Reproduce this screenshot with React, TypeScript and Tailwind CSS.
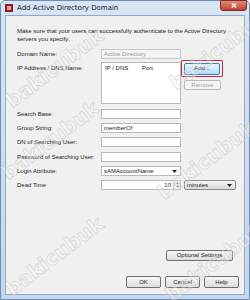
import React from "react";

const font = { fontFamily: '"Liberation Sans", Arial, sans-serif' };

function Btn({ children, className = "" }: { children: React.ReactNode; className?: string }) {
  return (
    <div
      className={
        "flex items-center justify-center rounded-[2px] border border-[#707070] bg-gradient-to-b from-[#f6f6f6] to-[#dddddd] text-[6px] text-[#222] " +
        className
      }
    >
      {children}
    </div>
  );
}

function Field({ children, className = "" }: { children?: React.ReactNode; className?: string }) {
  return (
    <div className={"h-[10px] w-[80px] border border-[#b5b9c0] bg-white flex items-center px-[2px] text-[6px] text-[#222] " + className}>
      {children}
    </div>
  );
}

function Row({ label, children, mt = "mt-[4px]" }: { label: string; children: React.ReactNode; mt?: string }) {
  return (
    <div className={"flex items-center " + mt}>
      <div className="w-[84px] text-[6px] text-[#222] leading-none">{label}</div>
      {children}
    </div>
  );
}

function Arrow() {
  return (
    <svg width="5" height="3" viewBox="0 0 5 3">
      <path d="M0 0 L5 0 L2.5 3 Z" fill="#222" />
    </svg>
  );
}

function Watermark({ className }: { className: string }) {
  return (
    <div
      className={
        "pointer-events-none absolute origin-left -rotate-[37deg] text-[20px] font-bold text-white/40 opacity-70 [-webkit-text-stroke:0.6px_#c4c4c4] " +
        className
      }
      style={{ fontFamily: '"DejaVu Sans", sans-serif' }}
    >
      bakicubuk
    </div>
  );
}

export default function App() {
  return (
    <div className="relative h-[300px] w-[250px] overflow-hidden" style={font}>
      <div className="flex h-full w-full flex-col rounded-t-[5px] border border-[#6f8db3] bg-gradient-to-b from-[#d7e5f5] to-[#c3d7ee]">
        {/* title bar */}
        <div className="relative flex h-[14px] items-center pl-[4px]">
          <div className="flex h-[8px] w-[8px] items-center justify-center bg-[#8a2320]">
            <div className="h-[4px] w-[4px] bg-[#e8a0a0]" />
          </div>
          <div className="ml-[4px] text-[7px] text-[#1a1a1a]" style={{ fontFamily: '"DejaVu Sans", sans-serif' }}>
            Add Active Directory Domain
          </div>
          <div className="absolute right-[2px] top-[-1px] flex h-[11px] w-[27px] items-center justify-center rounded-b-[3px] border border-[#7a2f24] bg-gradient-to-b from-[#e08b78] to-[#c13f28]">
            <svg width="6" height="5" viewBox="0 0 6 5">
              <path d="M0.8 0.5 L5.2 4.5 M5.2 0.5 L0.8 4.5" stroke="white" strokeWidth="1.3" />
            </svg>
          </div>
        </div>
        {/* client */}
        <div className="mx-[4px] mb-[4px] flex flex-1 flex-col border border-[#98a8bd] bg-[#f0f0f0] pl-[11px] pr-[5px]">
          <p className="mt-[11px] text-[6px] leading-[8px] text-[#222]">
            Make sure that your users can successfully authenticate to the Active Directory servers you specify.
          </p>
          <Row label="Domain Name:" mt="mt-[6px]">
            <Field className="!border-[#c8c8c8] !bg-[#f3f3f3] !text-[#999]">Active Directory</Field>
          </Row>
          <div className="mt-[3px] flex items-start">
            <div className="w-[84px] pt-[3px] text-[6px] leading-none text-[#222]">IP Address / DNS Name:</div>
            <div className="h-[42px] w-[80px] border border-[#b5b9c0] bg-white">
              <div className="flex h-[11px] items-center text-[6px] text-[#222]">
                <div className="w-[40px] pl-[3px]">IP / DNS</div>
                <div>Port</div>
              </div>
            </div>
            <div className="flex flex-col items-start">
              <div className="mt-[-2px] rounded-[1px] border-[1.5px] border-[#c4283e] px-[2px] py-[1.5px]">
                <div className="flex h-[12px] w-[36px] items-center justify-center rounded-[2px] border border-[#3c7fb1] bg-gradient-to-b from-[#eaf6fd] to-[#b2dcf5] text-[6px] text-[#222]">
                  Add...
                </div>
              </div>
              <div className="ml-[3px] mt-[3px] flex h-[10px] w-[37px] items-center justify-center rounded-[2px] border border-[#b8bcc0] bg-[#f4f4f4] text-[6px] text-[#9a9a9a]">
                Remove
              </div>
            </div>
          </div>
          <Row label="Search Base:" mt="mt-[5px]">
            <Field />
          </Row>
          <Row label="Group String:">
            <Field>memberOf</Field>
          </Row>
          <Row label="DN of Searching User:">
            <Field />
          </Row>
          <Row label="Password of Searching User:" mt="mt-[5px]">
            <Field />
          </Row>
          <Row label="Login Attribute:">
            <Field className="justify-between !pr-[3px]">
              <span>sAMAccountName</span>
              <Arrow />
            </Field>
          </Row>
          <Row label="Dead Time">
            <div className="flex h-[10px] w-[80px] border border-[#b5b9c0] bg-white">
              <div className="flex flex-1 items-center justify-end pr-[2px] text-[6px] text-[#222]">10</div>
              <div className="flex w-[7px] flex-col border-l border-[#d0d0d0]">
                <div className="flex flex-1 items-center justify-center border-b border-[#d0d0d0] bg-[#f2f2f2]">
                  <svg width="3" height="2" viewBox="0 0 3 2"><path d="M0 2 L1.5 0 L3 2 Z" fill="#888" /></svg>
                </div>
                <div className="flex flex-1 items-center justify-center bg-[#f2f2f2]">
                  <svg width="3" height="2" viewBox="0 0 3 2"><path d="M0 0 L1.5 2 L3 0 Z" fill="#888" /></svg>
                </div>
              </div>
            </div>
            <div className="ml-[3px] flex h-[10px] w-[52px] items-center justify-between rounded-[2px] border border-[#8a8a8a] bg-gradient-to-b from-[#f6f6f6] to-[#dadada] pl-[2px] pr-[3px] text-[6px] text-[#222]">
              <span>minutes</span>
              <Arrow />
            </div>
          </Row>
          <div className="flex-1" />
          <div className="flex justify-end pr-[6px]">
            <Btn className="h-[11px] w-[67px]">Optional Settings</Btn>
          </div>
          <div className="mb-[6px] mt-[15px] flex justify-end gap-[4px]">
            <Btn className="h-[12px] w-[35px]">OK</Btn>
            <Btn className="h-[12px] w-[35px]">Cancel</Btn>
            <Btn className="h-[12px] w-[35px]">Help</Btn>
          </div>
        </div>
      </div>
      <Watermark className="left-[8px] top-[88px]" />
      <Watermark className="left-[172px] top-[70px]" />
      <Watermark className="left-[4px] top-[160px]" />
      <Watermark className="left-[160px] top-[180px]" />
      <Watermark className="left-[8px] top-[276px]" />
      <Watermark className="left-[168px] top-[282px]" />
    </div>
  );
}
